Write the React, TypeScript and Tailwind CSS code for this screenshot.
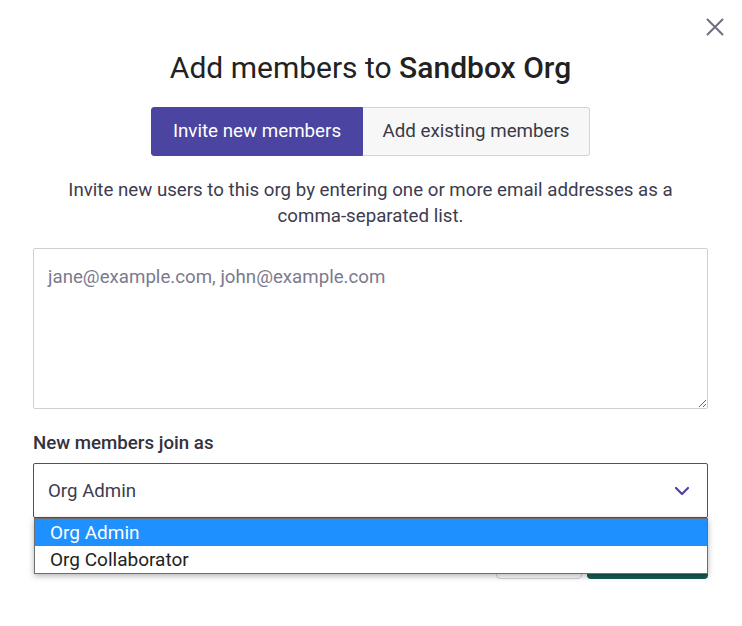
import React from "react";

export default function App() {
  return (
    <div
      className="relative w-[742px] h-[626px] bg-white overflow-hidden"
      style={{ fontFamily: "Roboto, 'Noto Sans', sans-serif" }}
    >
      <button className="absolute right-[17px] top-[17px] w-[20px] h-[20px] flex items-center justify-center text-[#6f6e85]">
        <svg width="20" height="20" viewBox="0 0 20 20" fill="none" stroke="currentColor" strokeWidth="2" strokeLinecap="round">
          <path d="M2.5 2.5 L17.5 17.5 M17.5 2.5 L2.5 17.5" />
        </svg>
      </button>

      <div className="flex flex-col pl-[33px] pr-[34px] pt-[48px]">
        <h1 className="text-center text-[30px] leading-[40px] text-[#222222] font-normal">
          Add members to <span className="font-medium">Sandbox Org</span>
        </h1>

        <div className="mt-[19px] flex justify-center">
          <div className="flex h-[49px]">
            <button className="w-[212px] rounded-l-[3px] bg-[#4b44a0] text-white text-[18.75px] border border-[#4b44a0]">
              Invite new members
            </button>
            <button className="w-[227px] rounded-r-[3px] bg-[#f7f7f7] text-[#3a3a48] text-[18.75px] border border-l-0 border-[#d3d3dc]">
              Add existing members
            </button>
          </div>
        </div>

        <p className="mt-[21px] text-center text-[18.7px] leading-[26px] text-[#3d3c4f] px-[20px]">
          Invite new users to this org by entering one or more email addresses as a comma-separated list.
        </p>

        <textarea
          className="mt-[19px] h-[161px] w-full border border-[#cfcfd6] rounded-[2px] px-[14px] pt-[15px] text-[18.7px] leading-[26px] text-[#333] placeholder:text-[#7b7a8e] outline-none resize-y"
          placeholder="jane@example.com, john@example.com"
        />

        <label className="mt-[23px] text-[18.7px] leading-[22px] font-medium text-[#333240]">
          New members join as
        </label>

        <div className="mt-[9px] relative">
          <div className="h-[55px] w-full border border-[#4b44a0] rounded-[2px] flex items-center justify-between pl-[14px] pr-[17px]">
            <span className="text-[18.7px] text-[#3d3c4f] pt-[2px]">Org Admin</span>
            <svg width="16" height="10" viewBox="0 0 16 10" fill="none" stroke="#4b44a0" strokeWidth="2.2" strokeLinecap="round" strokeLinejoin="round">
              <path d="M2 2 L8 8 L14 2" />
            </svg>
          </div>

          <div className="flex justify-end gap-[5px] mt-[23px]">
            <button className="w-[86px] h-[38px] rounded-[4px] border border-[#cfcfd6] bg-white text-[16px] text-[#333]">
              Cancel
            </button>
            <button className="w-[121px] h-[38px] rounded-[4px] bg-[#165c58] text-white text-[16px]">
              Add
            </button>
          </div>

          <div className="absolute left-[1px] right-0 top-[55px] bg-white border border-[#6e6e6e] shadow-[0_2px_6px_rgba(0,0,0,0.3)]">
            <div className="h-[27px] bg-[#1e90ff] text-white text-[19px] leading-[27px] pl-[15px]">Org Admin</div>
            <div className="h-[27px] bg-white text-[#222] text-[19px] leading-[27px] pl-[15px]">Org Collaborator</div>
          </div>
        </div>
      </div>
    </div>
  );
}
